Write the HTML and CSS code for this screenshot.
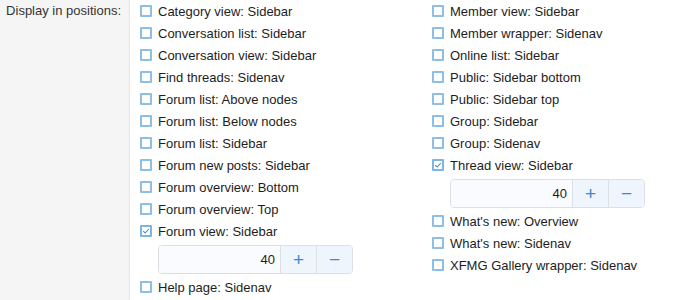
FILE: index.html
```html
<!DOCTYPE html>
<html lang="en">
<head>
    <meta charset="UTF-8">
    <title>Display in positions</title>
    <link rel="stylesheet" href="styles.css">
</head>
<body>
    <div class="form-row">
        <div class="row-label">Display in positions:</div>
        <div class="row-input">
            <ul class="choices">
                <li class="choice"><span class="box"></span>Category view: Sidebar</li>
                <li class="choice"><span class="box"></span>Conversation list: Sidebar</li>
                <li class="choice"><span class="box"></span>Conversation view: Sidebar</li>
                <li class="choice"><span class="box"></span>Find threads: Sidenav</li>
                <li class="choice"><span class="box"></span>Forum list: Above nodes</li>
                <li class="choice"><span class="box"></span>Forum list: Below nodes</li>
                <li class="choice"><span class="box"></span>Forum list: Sidebar</li>
                <li class="choice"><span class="box"></span>Forum new posts: Sidebar</li>
                <li class="choice"><span class="box"></span>Forum overview: Bottom</li>
                <li class="choice"><span class="box"></span>Forum overview: Top</li>
                <li class="choice"><span class="box checked"><svg viewBox="0 0 10 10" width="8" height="8"><path d="M1.5 5.2 L4 7.5 L8.5 2.5" fill="none" stroke="#3d8fd1" stroke-width="1.4"/></svg></span>Forum view: Sidebar</li>
                <li class="spinner">
                    <input type="text" value="40">
                    <button>+</button>
                    <button>&minus;</button>
                </li>
                <li class="choice"><span class="box"></span>Help page: Sidenav</li>
            </ul>
            <ul class="choices">
                <li class="choice"><span class="box"></span>Member view: Sidebar</li>
                <li class="choice"><span class="box"></span>Member wrapper: Sidenav</li>
                <li class="choice"><span class="box"></span>Online list: Sidebar</li>
                <li class="choice"><span class="box"></span>Public: Sidebar bottom</li>
                <li class="choice"><span class="box"></span>Public: Sidebar top</li>
                <li class="choice"><span class="box"></span>Group: Sidebar</li>
                <li class="choice"><span class="box"></span>Group: Sidenav</li>
                <li class="choice"><span class="box checked"><svg viewBox="0 0 10 10" width="8" height="8"><path d="M1.5 5.2 L4 7.5 L8.5 2.5" fill="none" stroke="#3d8fd1" stroke-width="1.4"/></svg></span>Thread view: Sidebar</li>
                <li class="spinner">
                    <input type="text" value="40">
                    <button>+</button>
                    <button>&minus;</button>
                </li>
                <li class="choice"><span class="box"></span>What's new: Overview</li>
                <li class="choice"><span class="box"></span>What's new: Sidenav</li>
                <li class="choice"><span class="box"></span>XFMG Gallery wrapper: Sidenav</li>
            </ul>
        </div>
    </div>
</body>
</html>
```

FILE: styles.css
```css
body {
    margin: 0;
    font-family: 'Liberation Sans', Arial, sans-serif;
    font-size: 13px;
    color: #1d1d1d;
    background-color: #fff;
}
.form-row {
    display: flex;
    height: 300px;
    overflow: hidden;
}
.row-label {
    box-sizing: border-box;
    width: 130px;
    flex-shrink: 0;
    background-color: #f5f5f5;
    border-right: 1px solid #e6e6e6;
    text-align: right;
    line-height: 22px;
    padding-right: 8px;
    color: #333;
}
.row-input {
    display: grid;
    grid-template-columns: 292px 292px;
    padding-left: 10px;
}
.choices {
    list-style: none;
    margin: 0;
    padding: 0;
}
.choice {
    display: flex;
    align-items: center;
    height: 22px;
}
.box {
    box-sizing: border-box;
    width: 12px;
    height: 12px;
    border: 2px solid #8dbfe6;
    border-radius: 1px;
    margin-right: 6px;
    display: flex;
    align-items: center;
    justify-content: center;
    background-color: #fff;
}
.box.checked {
    border-color: #7db5e2;
}
.spinner {
    display: flex;
    box-sizing: border-box;
    width: 195px;
    height: 29px;
    margin: 3px 0 2px 18px;
    border: 1px solid #dcdfe3;
    border-radius: 4px;
    overflow: hidden;
}
.spinner input {
    flex: 1;
    min-width: 0;
    border: none;
    background-color: #f9fbfe;
    font-family: inherit;
    font-size: 13px;
    color: #1d1d1d;
    text-align: right;
    padding: 0 5px 0 0;
    outline: none;
}
.spinner button {
    width: 36px;
    border: none;
    border-left: 1px solid #dcdfe3;
    background-color: #eef5fc;
    color: #3a8bcf;
    font-family: inherit;
    font-size: 19px;
    padding: 0;
    cursor: pointer;
}
```
